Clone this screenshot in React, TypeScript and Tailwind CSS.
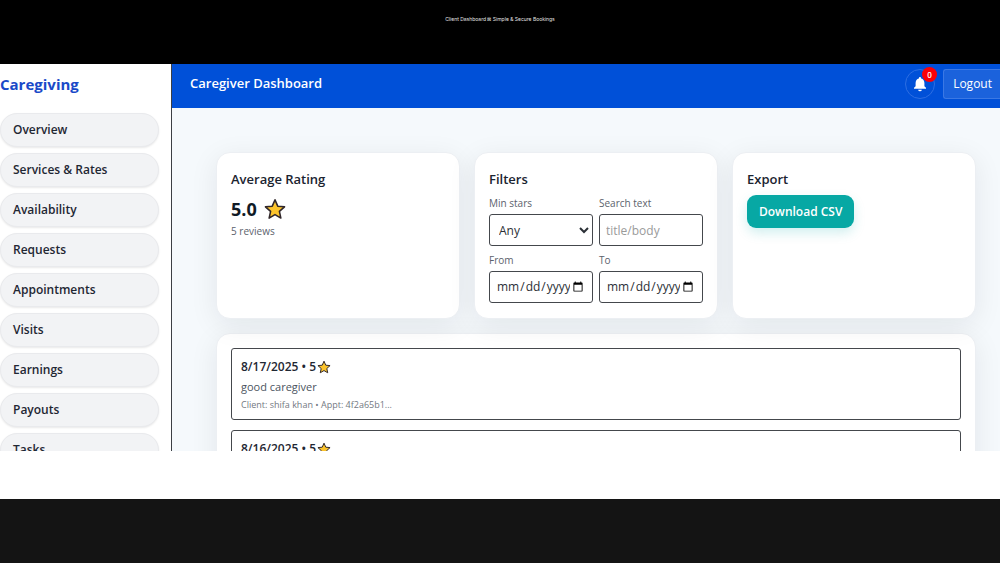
import React from "react";

const navItems = [
  "Overview",
  "Services & Rates",
  "Availability",
  "Requests",
  "Appointments",
  "Visits",
  "Earnings",
  "Payouts",
  "Tasks",
];

const reviews = [
  { date: "8/17/2025", stars: 5, body: "good caregiver", meta: "Client: shifa khan • Appt: 4f2a65b1..." },
  { date: "8/16/2025", stars: 5, body: "good caregiver", meta: "Client: shifa khan • Appt: 4f2a65b1..." },
];

const cardClass =
  "rounded-[14px] border border-[#eceff3] bg-white px-[14px] pt-[14px] pb-[15px] shadow-[0_6px_28px_rgba(15,23,42,0.08)]";
const headingClass = "text-[13px] leading-6 font-semibold text-[#1b2430]";
const labelClass = "block text-[10px] leading-4 text-[#5b626c]";
const fieldClass =
  "mt-[3px] block h-8 w-full min-w-0 rounded-[3px] border border-[#44474c] bg-white text-[12px] text-[#2b3036]";

function Star({ className }: { className: string }) {
  return (
    <svg viewBox="0 0 24 24" className={className} aria-hidden="true">
      <path
        d="M12 2l3 6.9 7.4.7-5.6 5 1.6 7.3L12 18.1l-6.4 3.8 1.6-7.3-5.6-5 7.4-.7z"
        fill="#fcc42c"
        stroke="#30272a"
        strokeWidth="1.7"
        strokeLinejoin="round"
      />
    </svg>
  );
}

function Bell() {
  return (
    <svg viewBox="0 0 24 24" className="h-4 w-4" fill="#ffffff" aria-hidden="true">
      <path d="M12 1.5a1.7 1.7 0 0 0-1.7 1.7v.6C7.2 4.6 5.4 7.2 5.4 10.4v4.8L3 17.6V19h18v-1.400l-2.400-2.400v-4.800c0-3.200-1.800-5.800-4.900-6.600v-.6A1.700 1.700 0 0 0 12 1.500z" />
      <path d="M9.300 20.500h5.400a2.700 2.500 0 0 1-5.400 0z" />
    </svg>
  );
}

function Sidebar() {
  return (
    <aside className="w-[172px] shrink-0 border-r border-[#3c3f44] bg-white pr-3">
      <div className="flex h-[49px] items-center pb-2 text-[15px] font-bold text-[#1a49c8]">Caregiving</div>
      <nav className="flex flex-col gap-[6px]">
        {navItems.map((item) => (
          <a
            key={item}
            href="#"
            className="flex h-[34px] items-center rounded-full border border-[#e9eaed] bg-[#f2f3f5] px-3 text-[12px] font-semibold text-[#1f2733] shadow-[0_1px_2px_rgba(0,0,0,0.09)]"
          >
            {item}
          </a>
        ))}
      </nav>
    </aside>
  );
}

function TopBar() {
  return (
    <header className="flex h-11 shrink-0 items-center bg-[#0050d8] pb-1 pl-[18px] text-white">
      <h1 className="flex-1 text-[13px] font-semibold">Caregiver Dashboard</h1>
      <button
        type="button"
        aria-label="Notifications"
        className="relative mr-2 flex h-[30px] w-[30px] items-center justify-center rounded-full border border-[#2d6ee2]"
      >
        <Bell />
        <span className="absolute -top-[3px] -right-[3px] flex h-[15px] w-[15px] items-center justify-center rounded-full bg-[#fb0007] text-[8px] font-semibold">
          0
        </span>
      </button>
      <button
        type="button"
        className="h-[30px] rounded-l-[3px] border border-r-0 border-[#3b78e4] bg-[#1b62dc] pr-2 pl-[9px] text-[12px]"
      >
        Logout
      </button>
    </header>
  );
}

function Filters() {
  return (
    <section className={cardClass}>
      <h2 className={headingClass}>Filters</h2>
      <div className="mt-1 grid grid-cols-2 gap-[6px]">
        <div>
          <label htmlFor="stars" className={labelClass}>Min stars</label>
          <select id="stars" className={`${fieldClass} pl-[5px]`}>
            <option>Any</option>
          </select>
        </div>
        <div>
          <label htmlFor="search" className={labelClass}>Search text</label>
          <input
            id="search"
            type="text"
            placeholder="title/body"
            className={`${fieldClass} px-[6px] placeholder:text-[#9a9a9a]`}
          />
        </div>
        <div>
          <label htmlFor="from" className={labelClass}>From</label>
          <input id="from" type="date" className={`${fieldClass} px-[6px]`} />
        </div>
        <div>
          <label htmlFor="to" className={labelClass}>To</label>
          <input id="to" type="date" className={`${fieldClass} px-[6px]`} />
        </div>
      </div>
    </section>
  );
}

export default function App() {
  return (
    <div className="flex h-screen flex-col bg-white font-['Open_Sans','Noto_Sans',sans-serif]">
      <div className="flex h-16 shrink-0 justify-center bg-black pt-[15px] font-['Inter','Liberation_Sans',sans-serif] text-[5px] leading-[8px] text-[#e4e4e4]">
        Client Dashboard ⊠ Simple &amp; Secure Bookings
      </div>
      <div className="flex min-h-0 flex-1 overflow-hidden">
        <Sidebar />
        <div className="flex min-w-0 flex-1 flex-col">
          <TopBar />
          <main className="min-h-0 flex-1 overflow-hidden bg-[#f5f9fc] pt-11 pr-6 pl-11">
            <div className="grid grid-cols-3 gap-[14px]">
              <section className={cardClass}>
                <h2 className={headingClass}>Average Rating</h2>
                <div className="mt-1 flex items-center gap-[7px] text-[18px] leading-7 font-bold text-[#111a26]">
                  5.0 <Star className="h-[22px] w-[22px]" />
                </div>
                <p className="text-[10px] leading-4 text-[#5b626c]">5 reviews</p>
              </section>
              <Filters />
              <section className={cardClass}>
                <h2 className={headingClass}>Export</h2>
                <button
                  type="button"
                  className="mt-1 h-[33px] rounded-[9px] bg-[#07a8a4] px-3 text-[12px] font-semibold text-white shadow-[0_5px_12px_rgba(7,168,164,0.18)]"
                >
                  Download CSV
                </button>
              </section>
            </div>
            <section className={`${cardClass} mt-[14px] flex flex-col gap-[10px]`}>
              {reviews.map((review) => (
                <article key={review.date} className="rounded-[3px] border border-[#44474c] px-[9px] pt-2 pb-[6px]">
                  <h3 className="flex items-center gap-px text-[12px] leading-5 font-semibold text-[#1f2733]">
                    {review.date} • {review.stars}
                    <Star className="h-[14px] w-[14px]" />
                  </h3>
                  <p className="text-[11px] leading-5 text-[#4b5460]">{review.body}</p>
                  <p className="text-[9px] leading-4 text-[#737982]">{review.meta}</p>
                </article>
              ))}
            </section>
          </main>
        </div>
      </div>
      <div className="h-12 shrink-0 bg-white" />
      <div className="h-16 shrink-0 bg-[#141414]" />
    </div>
  );
}
